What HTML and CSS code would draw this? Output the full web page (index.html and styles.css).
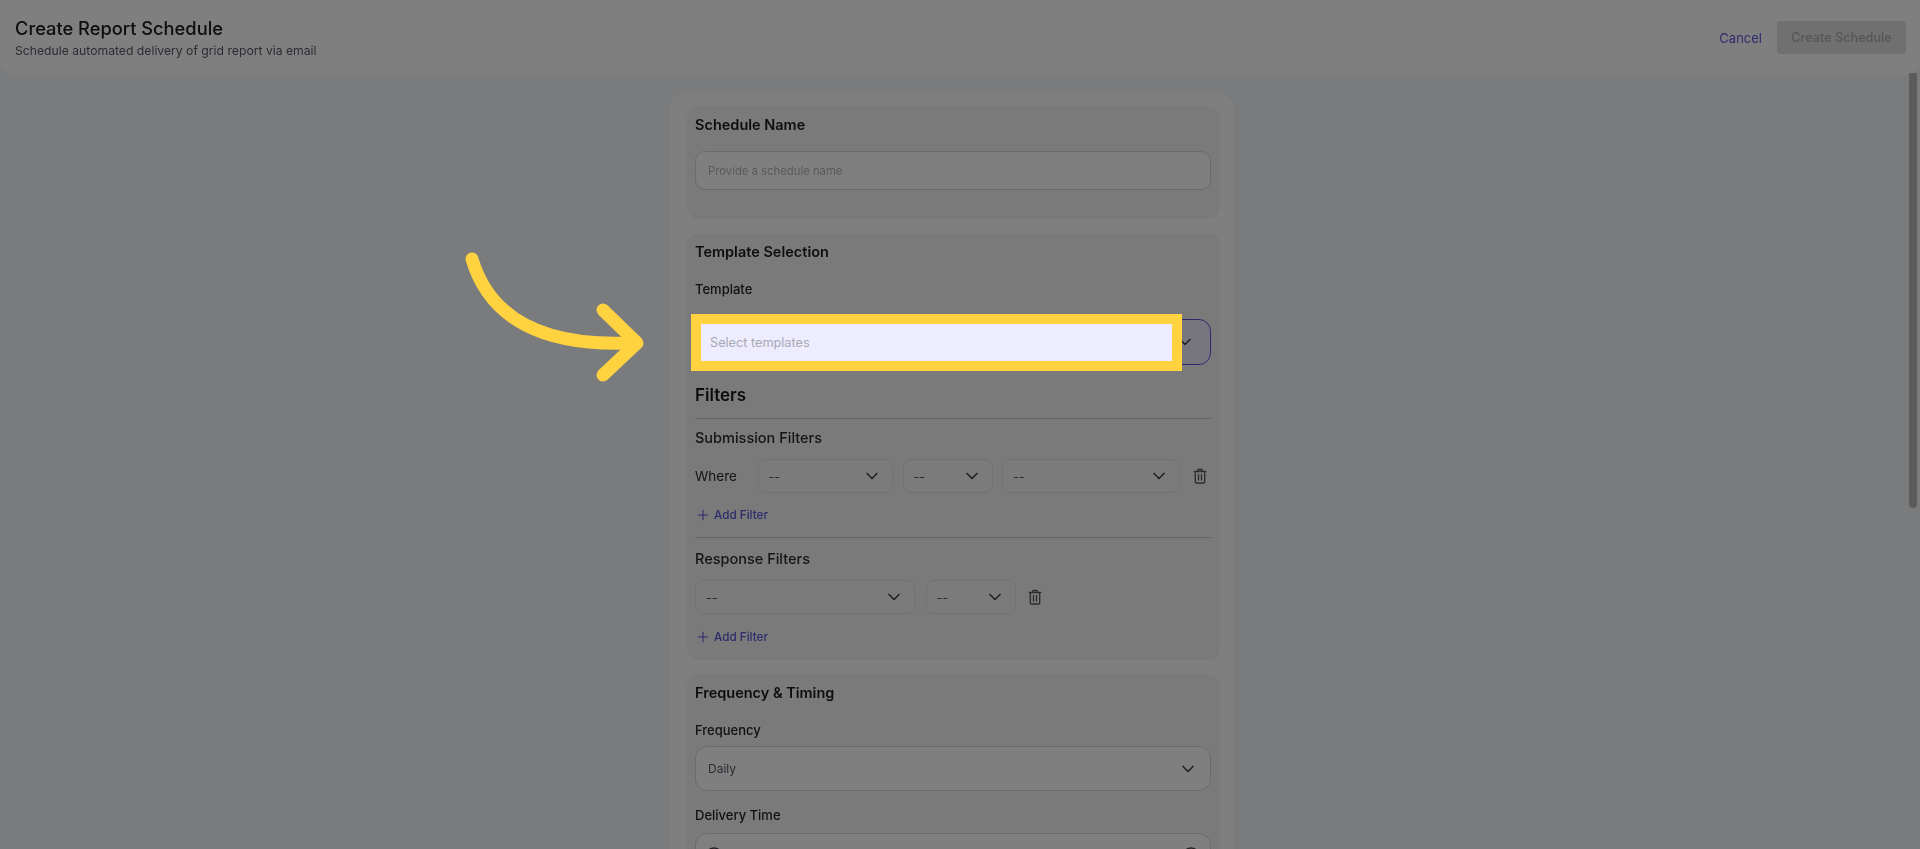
FILE: index.html
```html
<!DOCTYPE html>
<html lang="en">
<head>
    <meta charset="UTF-8">
    <meta name="viewport" content="width=device-width, initial-scale=1.0">
    <title>Create Report Schedule</title>
    <link rel="stylesheet" href="styles.css">
</head>
<body>
    <svg class="icon-defs" aria-hidden="true">
        <symbol id="chevron" viewBox="0 0 24 24"><path d="M6 9l6 6 6-6" fill="none" stroke="currentColor" stroke-width="2" stroke-linecap="round" stroke-linejoin="round"/></symbol>
        <symbol id="trash" viewBox="0 0 16 16"><path d="M2.3 3.5h11.4M5.8 3.5V2.2a.7.7 0 0 1 .7-.7h3a.7.7 0 0 1 .7.7v1.3M3.3 3.5V14a1 1 0 0 0 1 1h7.4a1 1 0 0 0 1-1V3.5M6.5 6.5v5.5M9.5 6.5v5.5" fill="none" stroke="currentColor" stroke-width="1.3" stroke-linecap="round" stroke-linejoin="round"/></symbol>
        <symbol id="plus" viewBox="0 0 12 12"><path d="M6 1.2v9.6M1.2 6h9.6" fill="none" stroke="currentColor" stroke-width="1.1" stroke-linecap="round"/></symbol>
        <symbol id="clock" viewBox="0 0 20 20"><circle cx="10" cy="10" r="8" fill="none" stroke="currentColor" stroke-width="1.6"/><path d="M10 5.5V10l3 2" fill="none" stroke="currentColor" stroke-width="1.6" stroke-linecap="round"/></symbol>
    </svg>

    <header class="topbar">
        <div>
            <h1>Create Report Schedule</h1>
            <p class="subtitle">Schedule automated delivery of grid report via email</p>
        </div>
        <div class="topbar-actions">
            <a class="link-cancel" href="#">Cancel</a>
            <button type="button" class="btn-create" disabled>Create Schedule</button>
        </div>
    </header>

    <main class="content">
        <div class="card">
            <section class="section section-name">
                <h2>Schedule Name</h2>
                <div class="field field-name"><span class="placeholder">Provide a schedule name</span></div>
            </section>

            <section class="section section-template">
                <h2>Template Selection</h2>
                <label class="label label-template">Template</label>
                <div class="field field-template">
                    <svg class="chevron"><use href="#chevron"/></svg>
                </div>

                <h3 class="filters-title">Filters</h3>
                <div class="divider divider-first"></div>
                <h4 class="filter-group">Submission Filters</h4>
                <div class="filter-row">
                    <span class="where">Where</span>
                    <div class="select w-135"><span>--</span><svg class="chevron"><use href="#chevron"/></svg></div>
                    <div class="select w-90"><span>--</span><svg class="chevron"><use href="#chevron"/></svg></div>
                    <div class="select w-178"><span>--</span><svg class="chevron"><use href="#chevron"/></svg></div>
                    <svg class="trash"><use href="#trash"/></svg>
                </div>
                <a class="add-filter" href="#"><svg class="plus"><use href="#plus"/></svg>Add Filter</a>
                <div class="divider divider-second"></div>
                <h4 class="filter-group filter-group-second">Response Filters</h4>
                <div class="filter-row filter-row-response">
                    <div class="select w-220"><span>--</span><svg class="chevron"><use href="#chevron"/></svg></div>
                    <div class="select w-90"><span>--</span><svg class="chevron"><use href="#chevron"/></svg></div>
                    <svg class="trash"><use href="#trash"/></svg>
                </div>
                <a class="add-filter add-filter-last" href="#"><svg class="plus"><use href="#plus"/></svg>Add Filter</a>
            </section>

            <section class="section">
                <h2>Frequency &amp; Timing</h2>
                <label class="label label-template">Frequency</label>
                <div class="field field-frequency">
                    <span>Daily</span>
                    <svg class="chevron"><use href="#chevron"/></svg>
                </div>
                <label class="label label-delivery">Delivery Time</label>
                <div class="field field-delivery">
                    <svg class="clock"><use href="#clock"/></svg>
                    <svg class="clock"><use href="#clock"/></svg>
                </div>
            </section>
        </div>
    </main>

    <div class="scrollbar"></div>

    <!-- guide layer on top of the page -->
    <div class="dim"></div>
    <div class="highlight"><span>Select templates</span></div>
    <svg class="arrow" viewBox="0 0 200 140" aria-hidden="true">
        <path d="M12 9C30 70 85 96 168 93" />
        <path d="M143 60L177 93L143 125" />
    </svg>
</body>
</html>
```

FILE: styles.css
```css
* {
    box-sizing: border-box;
}
html, body {
    height: 100%;
}
body {
    margin: 0;
    position: relative;
    overflow: hidden;
    font-family: Inter, "Noto Sans", sans-serif;
    background-color: #f5f7fa;
    color: #1a1a1e;
    filter: blur(0.4px);
}
h1, h2, h3, h4, p {
    margin: 0;
}
a {
    text-decoration: none;
}
.icon-defs {
    display: none;
}

/* top bar */
.topbar {
    height: 75px;
    padding: 0 14px 0 15px;
    display: flex;
    justify-content: space-between;
    align-items: flex-start;
    background-color: #fff;
    border-radius: 0 0 16px 16px;
}
h1 {
    margin-top: 16px;
    font-size: 18.3px;
    line-height: 24px;
    font-weight: 500;
    color: #1b1b1f;
}
.subtitle {
    margin-top: 1px;
    font-size: 12.2px;
    line-height: 20px;
    color: #555a66;
}
.topbar-actions {
    margin-top: 21px;
    display: flex;
    align-items: center;
    gap: 15px;
}
.link-cancel {
    font-size: 13px;
    color: #5d56d8;
}
.btn-create {
    width: 129px;
    height: 33px;
    padding: 0;
    border: none;
    border-radius: 4px;
    background-color: #e0e0e0;
    color: #ababab;
    font-family: inherit;
    font-size: 12.7px;
    font-weight: 500;
}

/* form */
.content {
    padding: 17px 17px 0 0;
}
.card {
    width: 563px;
    margin: 0 auto;
    padding: 14px 13px 14px 17px;
    background-color: #fff;
    border-radius: 16px;
    display: flex;
    flex-direction: column;
    gap: 14px;
}
.section {
    padding: 9px 9.5px 15px 8px;
    background-color: #f5f5f5;
    border-radius: 12px;
}
.section-name {
    padding-bottom: 29px;
}
h2 {
    font-size: 14.5px;
    line-height: 20px;
    font-weight: 600;
    color: #1b1b1f;
}
.label {
    display: block;
    font-size: 13px;
    line-height: 20px;
    font-weight: 500;
    color: #24242a;
}
.label-template {
    margin-top: 17px;
}
.label-delivery {
    margin-top: 14px;
}
.field {
    display: flex;
    align-items: center;
    justify-content: space-between;
    padding: 0 12px;
    border: 1.5px solid #d6d6da;
    border-radius: 12px;
    background-color: #fff;
    font-size: 12px;
    color: #555a66;
}
.field-name {
    height: 39px;
    margin-top: 16px;
    border-radius: 10px;
    font-size: 11.3px;
}
.field-template {
    height: 46px;
    margin-top: 20px;
    padding-right: 15px;
    justify-content: flex-end;
    border-color: #5a54e0;
    background-color: #eeecff;
}
.field-frequency {
    height: 45px;
    margin-top: 6px;
}
.field-delivery {
    height: 46px;
    margin-top: 8px;
    padding: 0 9px 0 8px;
}
.placeholder {
    color: #b3b3ba;
}
.chevron {
    width: 20px;
    height: 20px;
    color: #44454b;
    flex-shrink: 0;
}
.clock {
    width: 20px;
    height: 20px;
    color: #44454b;
}

.filters-title {
    margin-top: 18px;
    font-size: 17px;
    line-height: 24px;
    font-weight: 600;
    color: #1b1b1f;
}
.divider {
    height: 1px;
    background-color: #c9c9cc;
}
.divider-first {
    margin-top: 11px;
}
.divider-second {
    margin-top: 14px;
}
.filter-group {
    margin-top: 9px;
    font-size: 14.5px;
    line-height: 20px;
    font-weight: 500;
    color: #2b2b30;
}
.filter-group-second {
    margin-top: 11px;
}
.filter-row {
    margin-top: 11px;
    height: 34px;
    display: flex;
    align-items: center;
    gap: 9.5px;
}
.filter-row-response {
    gap: 11px;
}
.filter-row-response .trash {
    margin-left: 0;
}
.where {
    width: 53px;
    font-size: 13.5px;
    color: #2b2b30;
}
.select {
    height: 34px;
    padding: 0 10px;
    display: flex;
    align-items: center;
    justify-content: space-between;
    border: 1.5px solid #e4e4e7;
    border-radius: 8px;
    font-size: 12.5px;
    color: #55565c;
    background-color: #f7f7f7;
}
.w-135 { width: 135.5px; }
.w-90 { width: 90px; }
.w-178 { width: 178px; }
.w-220 { width: 219.5px; }
.trash {
    width: 16px;
    height: 16px;
    margin-left: 2.5px;
    color: #55565c;
}
.add-filter {
    margin-top: 14px;
    height: 16px;
    display: flex;
    align-items: center;
    gap: 5px;
    padding-left: 2px;
    font-size: 11.7px;
    font-weight: 500;
    color: #5d56d8;
}
.add-filter-last {
    margin-top: 15px;
}
.plus {
    width: 12px;
    height: 12px;
}

/* page scrollbar */
.scrollbar {
    position: absolute;
    top: 73px;
    left: 1909px;
    width: 8px;
    height: 435px;
    border-radius: 0 0 4px 4px;
    background-color: #b8b8b8;
}

/* guide layer */
.dim {
    position: absolute;
    inset: 0;
    background-color: rgba(0, 0, 0, 0.5);
}
.highlight {
    position: absolute;
    top: 314px;
    left: 691px;
    width: 490.5px;
    height: 57px;
    padding: 0 0 1px 9px;
    display: flex;
    align-items: center;
    border: 10.5px solid #ffd240;
    background-color: #eeecff;
    font-size: 12.7px;
    color: #a9a9b4;
}
.arrow {
    position: absolute;
    top: 250px;
    left: 460px;
    width: 200px;
    height: 140px;
}
.arrow path {
    fill: none;
    stroke: #ffd240;
    stroke-width: 13;
    stroke-linecap: round;
    stroke-linejoin: round;
}
```
